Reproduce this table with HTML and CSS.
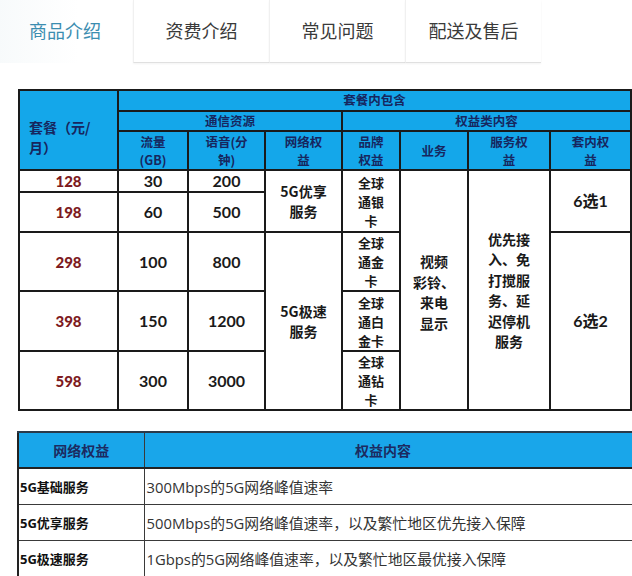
FILE: index.html
```html
<!DOCTYPE html>
<html lang="zh">
<head>
<meta charset="utf-8">
<link rel="stylesheet" href="styles.css">
</head>
<body>
<div class="page">
  <div class="tabs">
    <div class="tab active">商品介绍</div>
    <div class="tab">资费介绍</div>
    <div class="tab">常见问题</div>
    <div class="tab">配送及售后</div>
  </div>

  <table class="plan">
    <colgroup>
      <col class="c1"><col class="c2"><col class="c3"><col class="c4"><col class="c5"><col class="c6"><col class="c7"><col class="c8">
    </colgroup>
    <tr class="h1">
      <th rowspan="3" class="pkg">套餐（元/<br>月）</th>
      <th colspan="7">套餐内包含</th>
    </tr>
    <tr class="h2">
      <th colspan="3">通信资源</th>
      <th colspan="4">权益类内容</th>
    </tr>
    <tr class="h3">
      <th>流量<br>(GB)</th>
      <th>语音(分<br>钟)</th>
      <th>网络权<br>益</th>
      <th>品牌<br>权益</th>
      <th>业务</th>
      <th>服务权<br>益</th>
      <th>套内权<br>益</th>
    </tr>
    <tr class="r1">
      <td class="price">128</td>
      <td class="num">30</td>
      <td class="num">200</td>
      <td rowspan="2">5G优享<br>服务</td>
      <td rowspan="2" class="brand">全球<br>通银<br>卡</td>
      <td rowspan="5" class="biz">视频<br>彩铃、<br>来电<br>显示</td>
      <td rowspan="5" class="svc">优先接<br>入、免<br>打搅服<br>务、延<br>迟停机<br>服务</td>
      <td rowspan="2" class="num">6选1</td>
    </tr>
    <tr class="r2">
      <td class="price">198</td>
      <td class="num">60</td>
      <td class="num">500</td>
    </tr>
    <tr class="r3">
      <td class="price">298</td>
      <td class="num">100</td>
      <td class="num">800</td>
      <td rowspan="3">5G极速<br>服务</td>
      <td class="brand">全球<br>通金<br>卡</td>
      <td rowspan="3" class="num">6选2</td>
    </tr>
    <tr class="r4">
      <td class="price">398</td>
      <td class="num">150</td>
      <td class="num">1200</td>
      <td class="brand">全球<br>通白<br>金卡</td>
    </tr>
    <tr class="r5">
      <td class="price">598</td>
      <td class="num">300</td>
      <td class="num">3000</td>
      <td class="brand">全球<br>通钻<br>卡</td>
    </tr>
  </table>

  <table class="rights">
    <colgroup><col class="k1"><col class="k2"></colgroup>
    <tr class="rh">
      <th>网络权益</th>
      <th class="rhc">权益内容</th>
    </tr>
    <tr class="rr">
      <td class="lbl">5G基础服务</td>
      <td class="desc">300Mbps的5G网络峰值速率</td>
    </tr>
    <tr class="rr">
      <td class="lbl">5G优享服务</td>
      <td class="desc">500Mbps的5G网络峰值速率，以及繁忙地区优先接入保障</td>
    </tr>
    <tr class="rr">
      <td class="lbl">5G极速服务</td>
      <td class="desc">1Gbps的5G网络峰值速率，以及繁忙地区最优接入保障</td>
    </tr>
  </table>
</div>
</body>
</html>
```

FILE: styles.css
```css
html, body {
  margin: 0;
  padding: 0;
  background: #ffffff;
}
body {
  width: 632px;
  height: 576px;
  overflow: hidden;
  font-family: "Noto Sans CJK SC", sans-serif;
}
.page {
  width: 632px;
}
.tabs {
  display: flex;
  height: 63px;
  margin-left: -3px;
}
.tab {
  flex: 0 0 136px;
  box-sizing: border-box;
  display: flex;
  align-items: center;
  justify-content: center;
  font-size: 18px;
  color: #3a3a3a;
  border-bottom: 1px solid #e0e0e0;
  border-left: 1px solid #f0f0f0;
  box-shadow: 0 1px 2px rgba(0,0,0,0.05);
  padding-bottom: 3px;
}
.tab.active {
  color: #3b8db0;
  border: none;
  box-shadow: none;
  background: linear-gradient(90deg, #f7fafb 0%, #ffffff 60%);
}

table {
  border-collapse: collapse;
  table-layout: fixed;
}

.plan {
  margin-top: 26px;
  margin-left: 18px;
  width: 612px;
  font-family: "Noto Sans CJK SC", sans-serif;
  font-weight: 700;
}
.plan th, .plan td {
  border: 2px solid #1a1a1a;
  padding: 0;
  text-align: center;
  vertical-align: middle;
  font-size: 14px;
  line-height: 20.5px;
}
.plan th {
  background: #14a7ea;
  color: #17265e;
  font-size: 12.5px;
  line-height: 18.2px;
}
.c1 { width: 99px; }
.c2 { width: 70px; }
.c3 { width: 77px; }
.c4 { width: 77px; }
.c5 { width: 58px; }
.c6 { width: 68px; }
.c7 { width: 82px; }
.c8 { width: 81px; }

.plan .pkg {
  text-align: left;
  padding-left: 9px;
  padding-top: 14px;
  font-size: 14px;
  line-height: 20.5px;
}
.h1 { height: 21px; }
.h2 { height: 20px; }
.h3 { height: 39px; }
.r1 { height: 22px; }
.r2 { height: 40px; }
.r3 { height: 59px; }
.r4 { height: 60px; }
.r5 { height: 59px; }

.plan td {
  color: #1a1a1a;
}
.plan .brand {
  font-size: 13px;
  line-height: 19px;
}
.plan .svc, .plan .biz {
  line-height: 20.5px;
}
.plan .biz {
  padding-top: 4px;
}
.plan .price {
  color: #7d1a1e;
  font-family: "Lato", "Noto Sans CJK SC", sans-serif;
  font-weight: 900;
  font-size: 15px;
  line-height: 18px;
}
.plan .num {
  font-family: "Lato", "Noto Sans CJK SC", sans-serif;
  font-size: 16px;
  line-height: 18px;
}

.rights {
  margin-top: 20px;
  margin-left: 17px;
  width: 640px;
}
.k1 { width: 126px; }
.k2 { width: 514px; }
.rights th, .rights td {
  border: 1px solid #3a3a3a;
  padding: 0;
}
.rights tr > :first-child {
  border-left: 2px solid #222;
}
.rights th {
  background: #19a6ea;
  color: #1c2a60;
  font-size: 14px;
  font-weight: 700;
  height: 34px;
  text-align: center;
  border-bottom: 2px solid #222;
  border-top: 2px solid #2a3a4a;
}
.rights .rhc {
  padding-right: 36px;
}
.rr td {
  height: 35px;
  vertical-align: middle;
}
.rights .lbl {
  font-family: "Open Sans", "Noto Sans CJK SC", sans-serif;
  font-weight: 700;
  font-size: 13px;
  color: #111;
  padding-left: 1px;
}
.rights .desc {
  font-family: "Open Sans", "Noto Sans CJK SC", sans-serif;
  font-size: 14.8px;
  color: #333;
  padding-left: 2px;
  white-space: nowrap;
}
```
